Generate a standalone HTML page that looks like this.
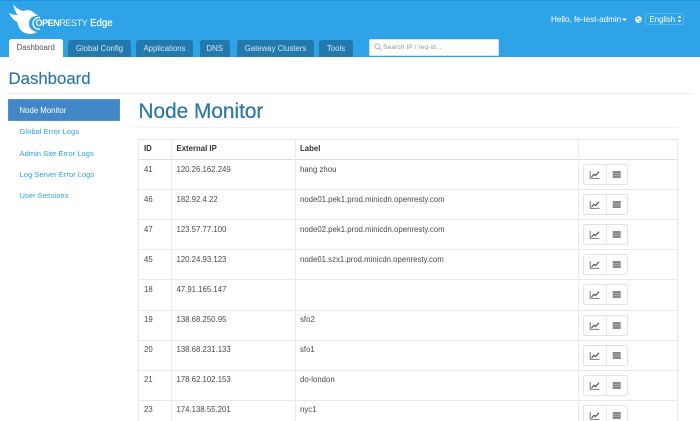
<!DOCTYPE html>
<html lang="en">
<head>
<meta charset="utf-8">
<title>Dashboard</title>
<style>
html,body{margin:0;padding:0;background:#fff}
body{width:700px;height:421px;overflow:hidden;position:relative;font-family:"Liberation Sans",Arial,sans-serif;font-size:7.8px;color:#333}
#w{position:absolute;left:0;top:0;width:700px;height:421px;overflow:hidden;filter:blur(.3px)}
.a{position:absolute;white-space:nowrap}
#top{position:absolute;left:0;top:0;width:700px;height:57px;background:#2fa3e7;border-top:1px solid #1f95dd;box-sizing:border-box}
.tab{position:absolute;top:39.5px;height:17.5px;line-height:17px;text-align:center;background:#2279ae;color:#d5e6f1;border-radius:2.5px 2.5px 0 0;font-size:7.8px}
.tab.on{background:#fff;color:#555;top:39px;height:18px}
.side{position:absolute;left:19.5px;font-size:7.6px;color:#2fa3e7;white-space:nowrap;line-height:10px}
.h{position:absolute;background:#e8e8e8;height:1px;left:138px;width:540px}
.v{position:absolute;background:#ebebeb;width:1px;top:139px;height:282px}
.c{position:absolute;font-size:7.8px;color:#4a4a4a;white-space:nowrap;line-height:10px}
.b{font-weight:bold;color:#333}
.btn{position:absolute;left:583px;width:44.5px;height:21px;box-sizing:border-box;border:1px solid #e2e2e2;border-radius:2.5px;background:#fff}
.btn i{position:absolute;left:21.5px;top:0;width:1px;height:100%;background:#e6e6e6}
.btn svg{position:absolute;left:0;top:0}
</style>
</head>
<body>
<div id="w">
<div id="top"></div>

<svg class="a" style="left:0;top:0" width="46" height="38" viewBox="0 0 46 38">
<path fill="#fff" d="M13 4C15 7 19 10 23 11C27 9.500 32 10 34 13L38 15.500L33.500 16.500C30 18 28.500 21 29 25C29.500 28 32 31 37 32C33 34.500 27 34.500 23 32C19.500 29.500 17.800 26 17.500 22C15 21 12 19 9 13C12 14.500 15 15 17.500 15C15.500 12 14 8 13 4Z"/>
<path fill="none" stroke="#fff" stroke-width="1.300" d="M40 17.500C36 17 33 20 33 23.500C33 27 36 29.500 40 29"/>
</svg>

<div class="a" style="left:35.500px;top:17px;font-size:9.200px;line-height:13px;color:#fff;letter-spacing:-.55px"><b>OPEN</b><span style="opacity:.85">RESTY</span></div>
<div class="a" style="left:90px;top:16.500px;font-size:9.700px;line-height:14px;color:#fff;-webkit-text-stroke:.15px #fff">Edge</div>

<div class="tab on" style="left:9px;width:53.500px">Dashboard</div>
<div class="tab" style="left:68px;width:63px">Global Config</div>
<div class="tab" style="left:136px;width:57px">Applications</div>
<div class="tab" style="left:200px;width:29.500px">DNS</div>
<div class="tab" style="left:237px;width:77px">Gateway Clusters</div>
<div class="tab" style="left:319px;width:34px">Tools</div>

<div class="a" style="left:369px;top:39px;width:129.500px;height:16.500px;background:#fff;border-radius:1.500px;box-sizing:border-box;border:1px solid #cfe6f5"></div>
<svg class="a" style="left:374px;top:43px" width="8" height="8" viewBox="0 0 8 8"><circle cx="3.300" cy="3.300" r="2.500" fill="none" stroke="#aaa" stroke-width=".8"/><path d="M5.200 5.200L7.300 7.300" stroke="#aaa" stroke-width=".9"/></svg>
<div class="a" style="left:383px;top:43px;font-size:6.800px;line-height:10px;color:#999">Search IP / req-id...</div>

<div class="a" style="left:551px;top:14.500px;font-size:8.100px;line-height:10px;color:#fff">Hello, fe-test-admin</div>
<svg class="a" style="left:621.500px;top:17.500px" width="5" height="4" viewBox="0 0 5 4"><path d="M0 .5H5L2.500 3.200Z" fill="#fff"/></svg>
<svg class="a" style="left:635px;top:15.500px" width="7" height="7" viewBox="0 0 7 7"><circle cx="3.500" cy="3.500" r="3.300" fill="#fff"/><path d="M2 1.500L4 2 3.500 3.500 2 3.500ZM4.500 4L6 4.200 5 5.800 4 5.500Z" fill="#2fa3e7"/></svg>
<div class="a" style="left:645px;top:13px;width:38.500px;height:12px;border:1px solid #5cb8ee;border-radius:3px;box-sizing:border-box"></div>
<div class="a" style="left:649.500px;top:14.500px;font-size:7.800px;line-height:10px;color:#fff">English</div>
<svg class="a" style="left:676.500px;top:15px" width="5" height="8" viewBox="0 0 5 8"><path d="M2.500 .5L4.300 3H.7ZM2.500 7.500L.7 5H4.300Z" fill="#fff"/></svg>

<div class="a" style="left:8.500px;top:68px;font-size:16.800px;line-height:21px;color:#2a76a8;-webkit-text-stroke:.15px #2a76a8">Dashboard</div>
<div class="a" style="left:8px;top:93px;width:684px;height:1px;background:#eee"></div>

<div class="a" style="left:8px;top:99px;width:112px;height:22px;background:#4288c8;border:1px solid #4a96d0;box-sizing:border-box"></div>
<div class="side" style="top:105.500px;color:#fff;font-size:7.800px">Node Monitor</div>
<div class="side" style="top:127px">Global Error Logs</div>
<div class="side" style="top:148.500px">Admin Site Error Logs</div>
<div class="side" style="top:169.500px">Log Server Error Logs</div>
<div class="side" style="top:191px">User Sessions</div>

<div class="a" style="left:138.500px;top:99px;font-size:20.800px;line-height:25px;color:#2a76a8;-webkit-text-stroke:.2px #2a76a8">Node Monitor</div>
<div class="a" style="left:138px;top:127px;width:540px;height:1px;background:#f2f2f2"></div>

<div class="h" style="top:139px"></div>
<div class="h" style="top:159px;background:#ddd"></div>
<div class="h" style="top:189px"></div>
<div class="h" style="top:219px"></div>
<div class="h" style="top:249px"></div>
<div class="h" style="top:279px"></div>
<div class="h" style="top:310px"></div>
<div class="h" style="top:340px"></div>
<div class="h" style="top:370px"></div>
<div class="h" style="top:400px"></div>
<div class="v" style="left:138px"></div>
<div class="v" style="left:171px"></div>
<div class="v" style="left:295px"></div>
<div class="v" style="left:578px"></div>
<div class="v" style="left:677px"></div>

<div class="c b" style="left:144px;top:144px">ID</div>
<div class="c b" style="left:176.500px;top:144px">External IP</div>
<div class="c b" style="left:300px;top:144px">Label</div>

<div class="c" style="left:144px;top:165px">41</div><div class="c" style="left:176.500px;top:165px">120.26.162.249</div><div class="c" style="left:300px;top:165px">hang zhou</div>
<div class="c" style="left:144px;top:195px">46</div><div class="c" style="left:176.500px;top:195px">182.92.4.22</div><div class="c" style="left:300px;top:195px">node01.pek1.prod.minicdn.openresty.com</div>
<div class="c" style="left:144px;top:225px">47</div><div class="c" style="left:176.500px;top:225px">123.57.77.100</div><div class="c" style="left:300px;top:225px">node02.pek1.prod.minicdn.openresty.com</div>
<div class="c" style="left:144px;top:255px">45</div><div class="c" style="left:176.500px;top:255px">120.24.93.123</div><div class="c" style="left:300px;top:255px">node01.szx1.prod.minicdn.openresty.com</div>
<div class="c" style="left:144px;top:285px">18</div><div class="c" style="left:176.500px;top:285px">47.91.165.147</div>
<div class="c" style="left:144px;top:315px">19</div><div class="c" style="left:176.500px;top:315px">138.68.250.95</div><div class="c" style="left:300px;top:315px">sfo2</div>
<div class="c" style="left:144px;top:345px">20</div><div class="c" style="left:176.500px;top:345px">138.68.231.133</div><div class="c" style="left:300px;top:345px">sfo1</div>
<div class="c" style="left:144px;top:375px">21</div><div class="c" style="left:176.500px;top:375px">178.62.102.153</div><div class="c" style="left:300px;top:375px">do-london</div>
<div class="c" style="left:144px;top:405px">23</div><div class="c" style="left:176.500px;top:405px">174.138.55.201</div><div class="c" style="left:300px;top:405px">nyc1</div>

<svg width="0" height="0" style="position:absolute"><defs>
<g id="ic">
<path d="M6.200 6v7.300h9.300" fill="none" stroke="#666" stroke-width=".9"/>
<path d="M7.500 12L10 9.300 11.500 10.500 15 6.800" fill="none" stroke="#555" stroke-width="1.200"/>
<path d="M28.700 6h8v7h-8z" fill="#8a8a8a"/>
<path d="M28.700 8.300h8M28.700 10.700h8" stroke="#c4c4c4" stroke-width=".4"/>
</g></defs></svg>

<div class="btn" style="top:164px"><i></i><svg width="42" height="19"><use href="#ic"/></svg></div>
<div class="btn" style="top:194px"><i></i><svg width="42" height="19"><use href="#ic"/></svg></div>
<div class="btn" style="top:224px"><i></i><svg width="42" height="19"><use href="#ic"/></svg></div>
<div class="btn" style="top:254px"><i></i><svg width="42" height="19"><use href="#ic"/></svg></div>
<div class="btn" style="top:284px"><i></i><svg width="42" height="19"><use href="#ic"/></svg></div>
<div class="btn" style="top:315px"><i></i><svg width="42" height="19"><use href="#ic"/></svg></div>
<div class="btn" style="top:345px"><i></i><svg width="42" height="19"><use href="#ic"/></svg></div>
<div class="btn" style="top:375px"><i></i><svg width="42" height="19"><use href="#ic"/></svg></div>
<div class="btn" style="top:405px"><i></i><svg width="42" height="19"><use href="#ic"/></svg></div>
</div>
</body>
</html>
